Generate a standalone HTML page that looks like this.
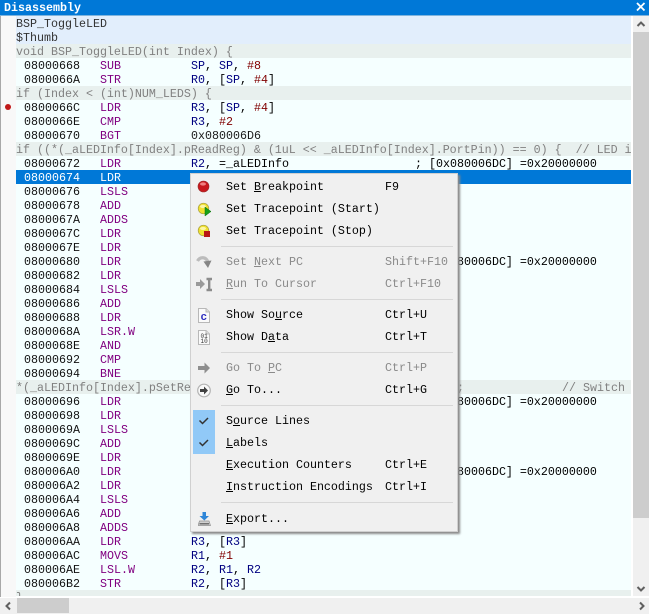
<!DOCTYPE html>
<html><head><meta charset="utf-8"><style>
html,body{margin:0;padding:0;background:#fff}
#w{position:relative;width:649px;height:614px;overflow:hidden;background:#fff;font:11.67px/14px "Liberation Mono",monospace;color:#000}
#w div{position:absolute}
.r{left:16px;width:615px;height:14px;line-height:16px;background:#f5ffff;white-space:pre}
.s{background:#e8f0ee;color:#808080}
.h{background:#e2eefc;color:#333}
.r span{position:absolute;top:0}
.a{left:8px;color:#111}
.m{left:84px;color:#800080}
.o{left:175px;color:#000080}
.c{left:399px;color:#000}
i{font-style:normal;color:#800000}
.o b{font-weight:normal;color:#000}
.t{left:226px;height:14px;white-space:pre;color:#000}
.k{left:385px;height:14px;white-space:pre;color:#000}
.d{color:#8a8a8a}
.p{left:221px;width:232px;height:1px;background:#d7d7d7}
svg{position:absolute}
</style></head><body><div id="w">
<div style="left:0;top:0;width:649px;height:15px;background:#0078d7"></div>
<div style="left:0;top:15px;width:649px;height:1px;background:#7fb4dd"></div>
<div style="left:4px;top:1px;height:14px;color:#fff;font-weight:bold;line-height:14px">Disassembly</div>
<svg style="left:636px;top:2px" width="10" height="10"><path d="M1 1L8.500 8.500M8.500 1L1 8.500" stroke="#fff" stroke-width="1.800"/></svg>
<div style="left:0;top:16px;width:1px;height:581px;background:#a8a8a8"></div>
<div style="left:1px;top:16px;width:15px;height:581px;background:#f8f8f8"></div>
<div style="left:5px;top:104px;width:6px;height:6px;border-radius:3px;background:#c01818"></div>

<div class="r h" style="top:16px">BSP_ToggleLED</div>
<div class="r h" style="top:30px">$Thumb</div>
<div class="r s" style="top:44px">void BSP_ToggleLED(int Index) {</div>
<div class="r" style="top:58px"><span class="a">08000668</span><span class="m">SUB</span><span class="o">SP<b>,</b> SP<b>,</b> <i>#8</i></span></div>
<div class="r" style="top:72px"><span class="a">0800066A</span><span class="m">STR</span><span class="o">R0<b>,</b> <b>[</b>SP<b>,</b> <i>#4</i><b>]</b></span></div>
<div class="r s" style="top:86px">if (Index &lt; (int)NUM_LEDS) {</div>
<div class="r" style="top:100px"><span class="a">0800066C</span><span class="m">LDR</span><span class="o">R3<b>,</b> <b>[</b>SP<b>,</b> <i>#4</i><b>]</b></span></div>
<div class="r" style="top:114px"><span class="a">0800066E</span><span class="m">CMP</span><span class="o">R3<b>,</b> <i>#2</i></span></div>
<div class="r" style="top:128px"><span class="a">08000670</span><span class="m">BGT</span><span class="o" style="color:#1a1a1a">0x080006D6</span></div>
<div class="r s" style="top:142px;overflow:hidden">if ((*(_aLEDInfo[Index].pReadReg) &amp; (1uL &lt;&lt; _aLEDInfo[Index].PortPin)) == 0) {  // LED is</div>
<div class="r" style="top:156px"><span class="a">08000672</span><span class="m">LDR</span><span class="o">R2<b>,</b> <b>=_aLEDInfo</b></span><span class="c">; [0x080006DC] =0x20000000</span></div>
<div class="r" style="top:170px;background:#0078d7"><span class="a" style="color:#fff">08000674</span><span class="m" style="color:#fff">LDR</span></div>
<div class="r" style="top:184px"><span class="a">08000676</span><span class="m">LSLS</span></div>
<div class="r" style="top:198px"><span class="a">08000678</span><span class="m">ADD</span></div>
<div class="r" style="top:212px"><span class="a">0800067A</span><span class="m">ADDS</span></div>
<div class="r" style="top:226px"><span class="a">0800067C</span><span class="m">LDR</span></div>
<div class="r" style="top:240px"><span class="a">0800067E</span><span class="m">LDR</span></div>
<div class="r" style="top:254px"><span class="a">08000680</span><span class="m">LDR</span><span class="c">; [0x080006DC] =0x20000000</span></div>
<div class="r" style="top:268px"><span class="a">08000682</span><span class="m">LDR</span></div>
<div class="r" style="top:282px"><span class="a">08000684</span><span class="m">LSLS</span></div>
<div class="r" style="top:296px"><span class="a">08000686</span><span class="m">ADD</span></div>
<div class="r" style="top:310px"><span class="a">08000688</span><span class="m">LDR</span></div>
<div class="r" style="top:324px"><span class="a">0800068A</span><span class="m">LSR.W</span></div>
<div class="r" style="top:338px"><span class="a">0800068E</span><span class="m">AND</span></div>
<div class="r" style="top:352px"><span class="a">08000692</span><span class="m">CMP</span></div>
<div class="r" style="top:366px"><span class="a">08000694</span><span class="m">BNE</span></div>
<div class="r s" style="top:380px">*(_aLEDInfo[Index].pSetReg)<span style="left:441px">;</span><span style="left:546px">// Switch</span></div>
<div class="r" style="top:394px"><span class="a">08000696</span><span class="m">LDR</span><span class="c">; [0x080006DC] =0x20000000</span></div>
<div class="r" style="top:408px"><span class="a">08000698</span><span class="m">LDR</span></div>
<div class="r" style="top:422px"><span class="a">0800069A</span><span class="m">LSLS</span></div>
<div class="r" style="top:436px"><span class="a">0800069C</span><span class="m">ADD</span></div>
<div class="r" style="top:450px"><span class="a">0800069E</span><span class="m">LDR</span></div>
<div class="r" style="top:464px"><span class="a">080006A0</span><span class="m">LDR</span><span class="c">; [0x080006DC] =0x20000000</span></div>
<div class="r" style="top:478px"><span class="a">080006A2</span><span class="m">LDR</span></div>
<div class="r" style="top:492px"><span class="a">080006A4</span><span class="m">LSLS</span></div>
<div class="r" style="top:506px"><span class="a">080006A6</span><span class="m">ADD</span></div>
<div class="r" style="top:520px"><span class="a">080006A8</span><span class="m">ADDS</span></div>
<div class="r" style="top:534px"><span class="a">080006AA</span><span class="m">LDR</span><span class="o">R3<b>,</b> <b>[</b>R3<b>]</b></span></div>
<div class="r" style="top:548px"><span class="a">080006AC</span><span class="m">MOVS</span><span class="o">R1<b>,</b> <i>#1</i></span></div>
<div class="r" style="top:562px"><span class="a">080006AE</span><span class="m">LSL.W</span><span class="o">R2<b>,</b> R1<b>,</b> R2</span></div>
<div class="r" style="top:576px"><span class="a">080006B2</span><span class="m">STR</span><span class="o">R2<b>,</b> <b>[</b>R3<b>]</b></span></div>
<div class="r s" style="top:590px;height:6px;overflow:hidden">}</div>

<!-- vertical scrollbar -->
<div style="left:633px;top:16px;width:16px;height:580px;background:#f0f0f0"></div>
<div style="left:633px;top:32px;width:16px;height:486px;background:#cdcdcd"></div>
<svg style="left:636px;top:20px" width="10" height="8"><path d="M1.500 6L5 2.500L8.500 6" fill="none" stroke="#606060" stroke-width="2"/></svg>
<svg style="left:636px;top:585px" width="10" height="8"><path d="M1.500 2L5 5.500L8.500 2" fill="none" stroke="#606060" stroke-width="2"/></svg>
<!-- horizontal scrollbar -->
<div style="left:0;top:598px;width:649px;height:16px;background:#f0f0f0"></div>
<div style="left:17px;top:598px;width:52px;height:15px;background:#cdcdcd"></div>
<svg style="left:4px;top:601px" width="8" height="10"><path d="M6 1.500L2.500 5L6 8.500" fill="none" stroke="#606060" stroke-width="2"/></svg>
<svg style="left:638px;top:601px" width="8" height="10"><path d="M2 1.500L5.500 5L2 8.500" fill="none" stroke="#606060" stroke-width="2"/></svg>

<!-- context menu -->
<div style="left:190px;top:173px;width:266px;height:357px;background:#f0f0f0;border:1px solid #d0d0d0;box-shadow:2px 2px 2px #8a8a8a"></div>
<div style="left:193px;top:410px;width:22px;height:44px;background:#91c9f7"></div>
<div class="p" style="top:246px"></div><div class="p" style="top:299px"></div><div class="p" style="top:352px"></div><div class="p" style="top:405px"></div><div class="p" style="top:502px"></div>

<div class="t" style="top:180px">Set <u>B</u>reakpoint</div><div class="k" style="top:180px">F9</div>
<div class="t" style="top:202px">Set Tracepoint (Start)</div>
<div class="t" style="top:224px">Set Tracepoint (Stop)</div>
<div class="t d" style="top:255px">Set <u>N</u>ext PC</div><div class="k d" style="top:255px">Shift+F10</div>
<div class="t d" style="top:277px"><u>R</u>un To Cursor</div><div class="k d" style="top:277px">Ctrl+F10</div>
<div class="t" style="top:308px">Show So<u>u</u>rce</div><div class="k" style="top:308px">Ctrl+U</div>
<div class="t" style="top:330px">Show D<u>a</u>ta</div><div class="k" style="top:330px">Ctrl+T</div>
<div class="t d" style="top:361px">Go To <u>P</u>C</div><div class="k d" style="top:361px">Ctrl+P</div>
<div class="t" style="top:383px"><u>G</u>o To...</div><div class="k" style="top:383px">Ctrl+G</div>
<div class="t" style="top:414px">S<u>o</u>urce Lines</div>
<div class="t" style="top:436px"><u>L</u>abels</div>
<div class="t" style="top:458px"><u>E</u>xecution Counters</div><div class="k" style="top:458px">Ctrl+E</div>
<div class="t" style="top:480px"><u>I</u>nstruction Encodings</div><div class="k" style="top:480px">Ctrl+I</div>
<div class="t" style="top:512px"><u>E</u>xport...</div>

<!-- icons -->
<svg style="left:197px;top:180px" width="14" height="14"><circle cx="6.500" cy="6.500" r="5.500" fill="#c8181c" stroke="#9a2a2a" stroke-width=".6"/><ellipse cx="6" cy="4" rx="3" ry="1.600" fill="#f08080"/></svg>
<svg style="left:197px;top:202px" width="16" height="16"><circle cx="6.500" cy="6.500" r="5.300" fill="#f0e030" stroke="#a8a040" stroke-width=".7"/><ellipse cx="6" cy="4.500" rx="3" ry="1.600" fill="#fbf6a8"/><path d="M8 5L14 9.500L8 14Z" fill="#18a018" stroke="#0a700a" stroke-width=".5"/></svg>
<svg style="left:197px;top:224px" width="16" height="16"><circle cx="6.500" cy="6.500" r="5.300" fill="#f0e030" stroke="#a8a040" stroke-width=".7"/><ellipse cx="6" cy="4.500" rx="3" ry="1.600" fill="#fbf6a8"/><rect x="7" y="7" width="6" height="6" fill="#b81414"/></svg>
<svg style="left:195px;top:254px" width="18" height="16"><path d="M2.500 7C5 2.500 11 2.500 13 8" fill="none" stroke="#bcbcbc" stroke-width="3.200"/><path d="M8.500 7.500L16.500 6.500L13 14Z" fill="#858585"/></svg>
<svg style="left:195px;top:276px" width="18" height="16"><path d="M1 6H5V3L10 8L5 13V10H1Z" fill="#9a9a9a"/><path d="M11.500 3H17M14.200 3V14M11.500 14H17" stroke="#8c8c8c" stroke-width="2.400" fill="none"/></svg>
<svg style="left:198px;top:308px" width="14" height="16"><path d="M.5 .5H8L11.500 4V14.500H.5Z" fill="#fafafa" stroke="#b8b8b8"/><path d="M8 .5V4H11.500" fill="#ddd" stroke="#b8b8b8"/><text x="2.500" y="12" font-family="Liberation Mono" font-weight="bold" font-size="11" fill="#3030c0">c</text></svg>
<svg style="left:198px;top:330px" width="14" height="16"><path d="M.5 .5H8L11.500 4V14.500H.5Z" fill="#fafafa" stroke="#b8b8b8"/><path d="M8 .5V4H11.500" fill="#ddd" stroke="#b8b8b8"/><text x="2.500" y="8" font-family="Liberation Mono" font-size="6" fill="#333">01</text><text x="2.500" y="13" font-family="Liberation Mono" font-size="6" fill="#333">10</text></svg>
<svg style="left:197px;top:361px" width="14" height="14"><path d="M1 5H7.500V1.500L13 7L7.500 12.500V9H1Z" fill="#8e8e8e"/></svg>
<svg style="left:197px;top:383px" width="15" height="15"><circle cx="7" cy="7.500" r="6.300" fill="#f8f8f8" stroke="#b4b4b4" stroke-width="1.200"/><path d="M3 6H7V3.500L11 7.500L7 11.500V9H3Z" fill="#404040"/></svg>
<svg style="left:198px;top:416px" width="12" height="10"><path d="M1.500 4.500L4.500 7.500L10 2" fill="none" stroke="#333" stroke-width="1.500"/></svg>
<svg style="left:198px;top:438px" width="12" height="10"><path d="M1.500 4.500L4.500 7.500L10 2" fill="none" stroke="#333" stroke-width="1.500"/></svg>
<svg style="left:198px;top:512px" width="13" height="15"><path d="M4.500 0H8V4H11L6.300 8.500L1.500 4H4.500Z" fill="#2f86d8"/><path d="M1.500 9H11L12.500 13.500H0Z" fill="#d0d0d0" stroke="#909090" stroke-width=".7"/><rect x="1.500" y="11" width="9.500" height="1.500" fill="#707070"/></svg>
</div></body></html>
